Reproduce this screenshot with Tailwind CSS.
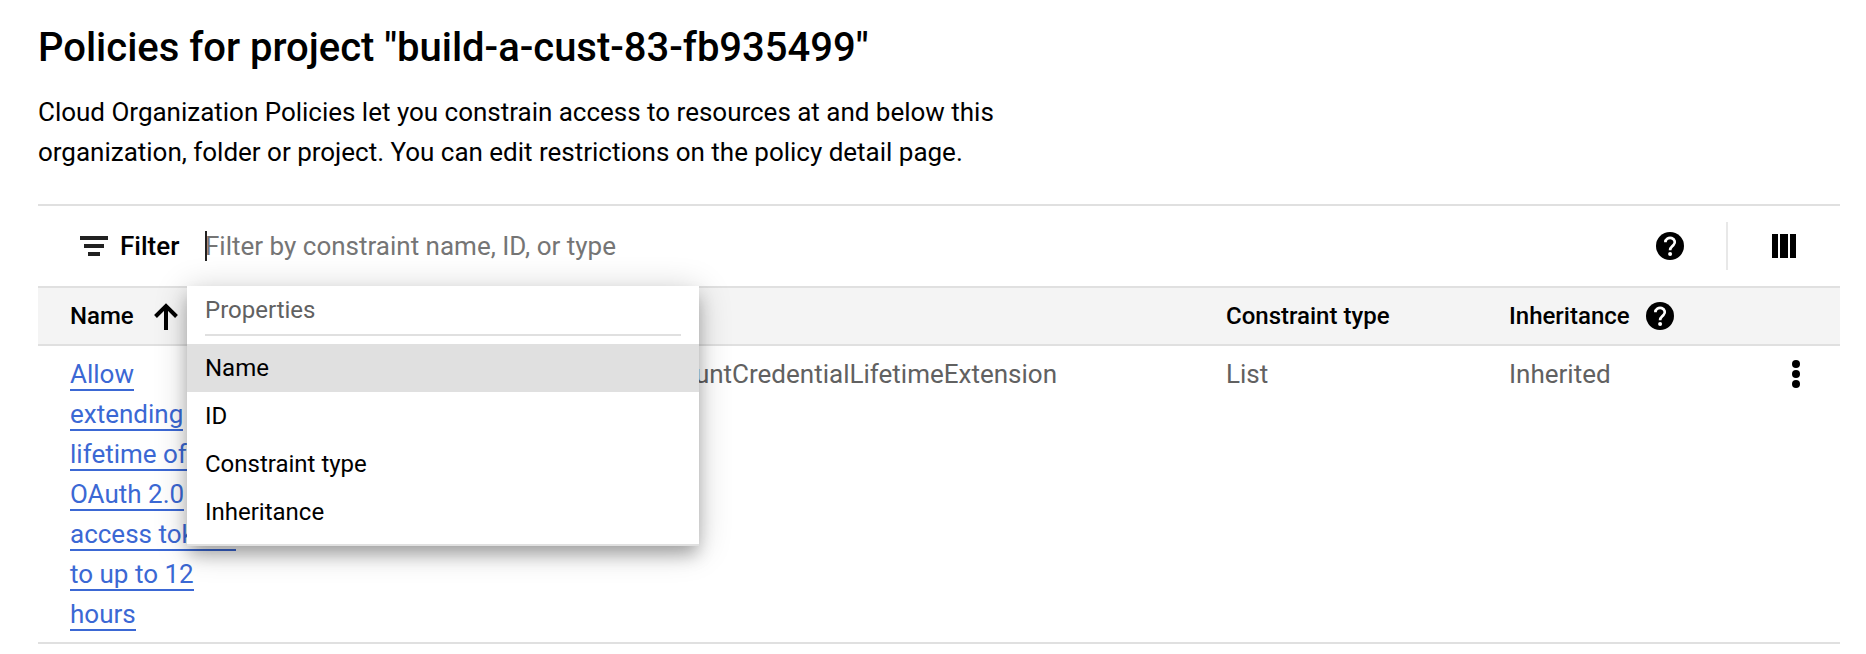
<!DOCTYPE html>
<html lang="en">
<head>
<meta charset="utf-8">
<title>Organization policies</title>
<script src="https://cdn.jsdelivr.net/npm/@tailwindcss/browser@4"></script>
</head>
<body class="h-[654px] overflow-hidden bg-white font-['Roboto',sans-serif] text-black">
<main class="ml-[38px] w-[1802px]">
  <h1 class="h-[92px] pt-[25px] text-[40px] leading-[46px] font-medium tracking-[-0.02px] whitespace-nowrap">Policies for project "build-a-cust-83-fb935499"</h1>
  <p class="text-[26px] leading-10 tracking-[-0.012px] whitespace-nowrap">Cloud Organization Policies let you constrain access to resources at and below this<br>organization, folder or project. You can edit restrictions on the policy detail page.</p>

  <section class="mt-8 border-t-2 border-[#e0e0e0]">
    <div class="relative flex h-20 items-center">
      <svg class="ml-[42px] h-5 w-7" viewBox="0 0 28 20" fill="#212121"><path d="M0 0h28v4H0zM4 8h20v4H4zM8 16h12v4H8z"/></svg>
      <span class="ml-3 w-[85px] text-[26px] font-medium">Filter</span>
      <span class="relative text-[26px] text-[#757575]"><i class="absolute top-1 left-0 h-[30px] w-0.5 bg-[#212121]"></i>Filter by constraint name, ID, or type</span>
      <svg class="ml-auto size-7" viewBox="0 0 28 28"><circle cx="14" cy="14" r="14"/><path d="M9.400 10.200a4.700 4.200 0 1 1 8.200 2.700c-1.700 1.900-3.500 2.300-3.500 5.300" fill="none" stroke="#fff" stroke-width="2.700"/><circle cx="14.100" cy="22" r="2" fill="#fff"/></svg>
      <i class="ml-[42px] h-12 w-0.5 bg-[#e8e8e8]"></i>
      <svg class="mr-11 ml-11 size-6" viewBox="0 0 24 24"><path d="M0 0h6v24H0zM8 0h8v24H8zM18 0h6v24h-6z"/></svg>

      <div class="absolute top-20 left-[149px] z-10 w-[512px] border-b-2 border-[#e0e0e0] bg-white pb-2 text-2xl leading-[48px] shadow-[0_4px_32px_rgba(0,0,0,0.2),0_10px_16px_-2px_rgba(0,0,0,0.28)]">
        <div class="mx-[18px] mb-2 h-[50px] border-b-2 border-[#e0e0e0] text-[#616161]">Properties</div>
        <div class="h-12 bg-[#e0e0e0] px-[18px]">Name</div>
        <div class="h-12 px-[18px]">ID</div>
        <div class="h-12 px-[18px]">Constraint type</div>
        <div class="h-12 px-[18px]">Inheritance</div>
      </div>
    </div>

    <div class="grid h-[60px] grid-cols-[414px_774px_283px_1fr] items-center border-y-2 border-[#e0e0e0] bg-[#f4f4f4] text-2xl font-medium">
      <div class="flex items-center pl-8"><span class="w-[84px]">Name</span><svg class="h-7 w-6" viewBox="0 0 24 28" fill="none" stroke="#000" stroke-width="4"><path d="M12 28V4M1.500 14.500L12 4l10.500 10.500"/></svg></div>
      <div class="pl-8">ID</div>
      <div>Constraint type</div>
      <div class="flex items-center"><span class="w-[137px]">Inheritance</span><svg class="size-7" viewBox="0 0 28 28"><circle cx="14" cy="14" r="14"/><path d="M9.400 10.200a4.700 4.200 0 1 1 8.200 2.700c-1.700 1.900-3.500 2.300-3.500 5.300" fill="none" stroke="#fff" stroke-width="2.700"/><circle cx="14.100" cy="22" r="2" fill="#fff"/></svg></div>
    </div>

    <div class="grid h-[298px] grid-cols-[414px_774px_283px_1fr] border-b-2 border-[#e0e0e0] pt-2 text-[26px] leading-10 text-[#616161]">
      <div class="w-[210px] pl-8"><a class="border-b-2 border-[#3b68d4] text-[#3b68d4]">Allow<br>extending<br>lifetime of<br>OAuth 2.0<br>access tokens<br>to up to 12<br>hours</a></div>
      <div class="flex justify-end pr-[169px]">iam.allowServiceAccountCredentialLifetimeExtension</div>
      <div>List</div>
      <div class="flex justify-between pr-10"><span>Inherited</span><svg class="mt-1.5 h-7 w-2" viewBox="0 0 8 28"><circle cx="4" cy="4" r="4"/><circle cx="4" cy="14" r="4"/><circle cx="4" cy="24" r="4"/></svg></div>
    </div>
  </section>
</main>
</body>
</html>
